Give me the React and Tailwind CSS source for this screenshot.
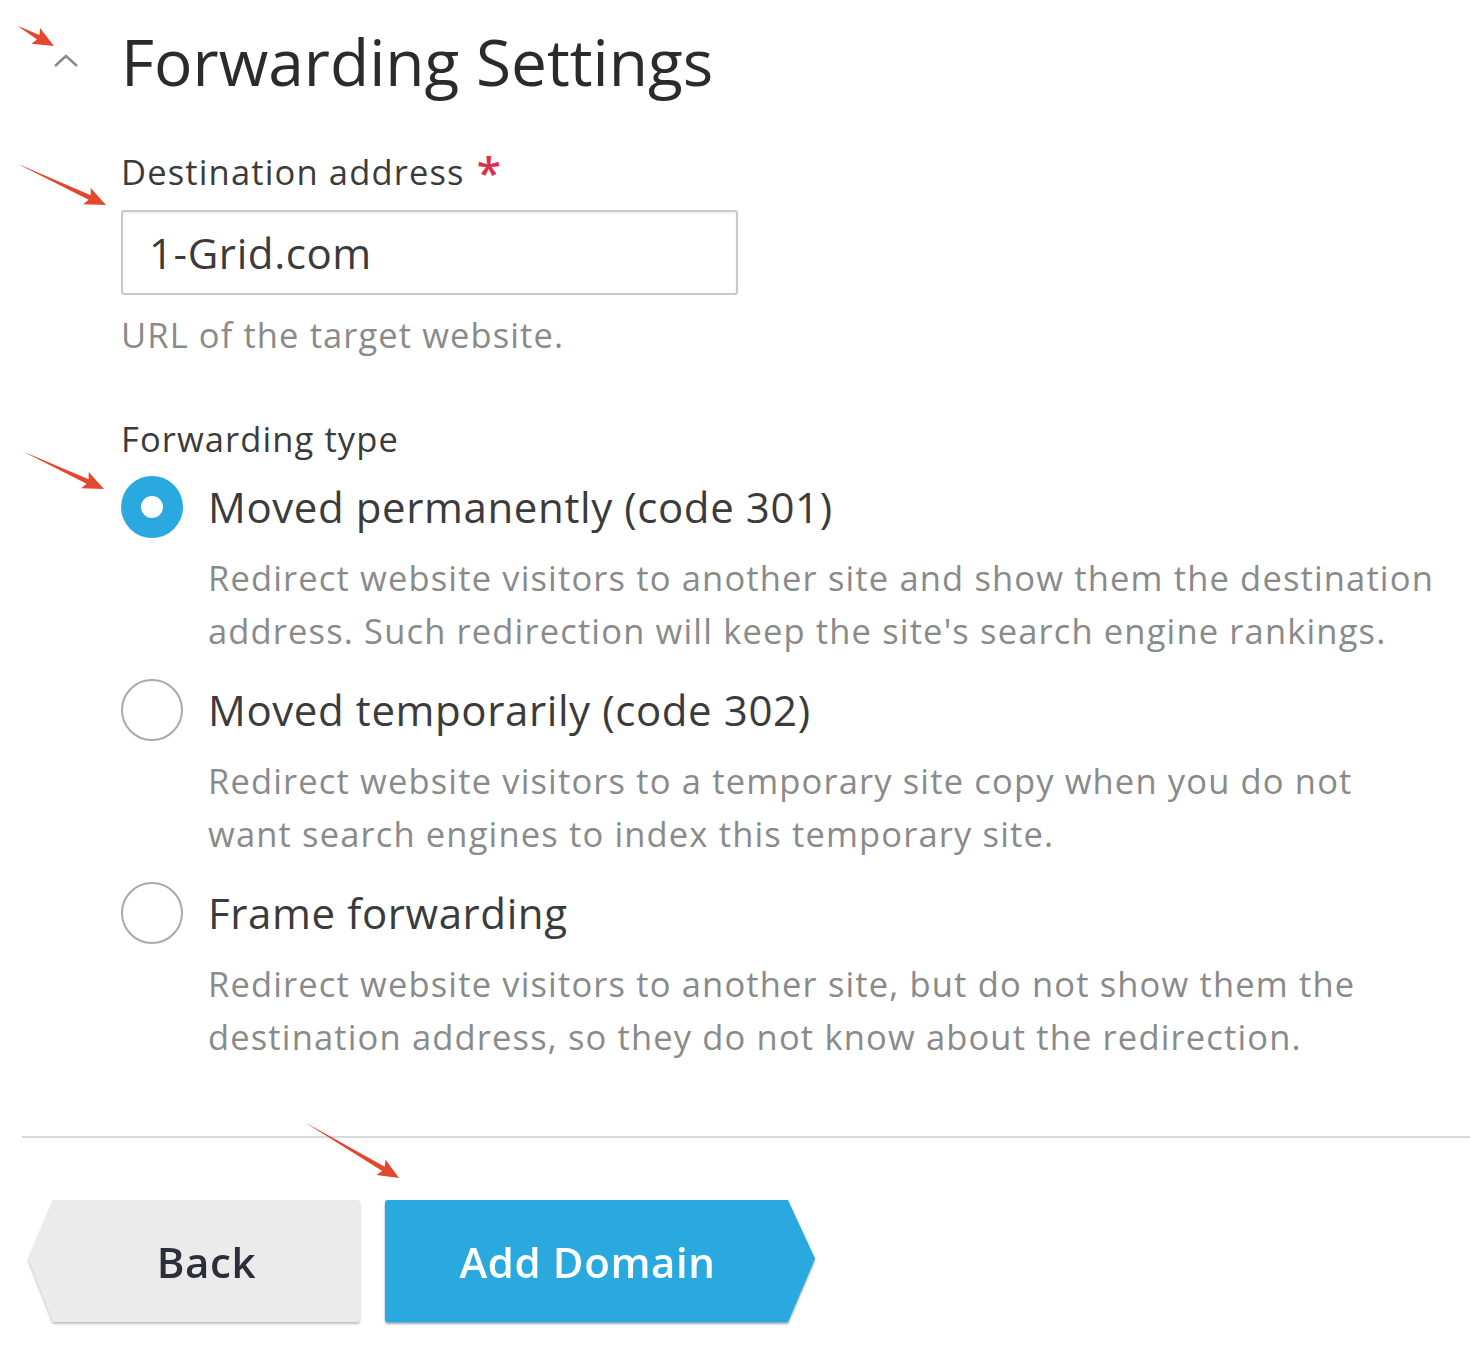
import React from "react";

function Arrow({ x1, y1, x2, y2 }) {
  const angle = Math.atan2(y2 - y1, x2 - x1);
  const len = Math.hypot(x2 - x1, y2 - y1);
  return (
    <svg
      className="absolute pointer-events-none overflow-visible"
      style={{ left: x1, top: y1, width: 1, height: 1 }}
    >
      <g transform={`rotate(${(angle * 180) / Math.PI})`}>
        <polygon
          points={`0,0 ${len - 18},-2.5 ${len - 21},-9 ${len},0 ${len - 21},9 ${len - 18},2.5`}
          fill="#e4472f"
        />
        <polygon points={`0,0 ${len - 18},-1.3 ${len - 18},1.3`} fill="#e4472f" />
      </g>
    </svg>
  );
}

function Radio({ checked }) {
  if (checked) {
    return (
      <div className="w-[62px] h-[62px] rounded-full bg-[#29a9df] flex items-center justify-center shrink-0">
        <div className="w-[22px] h-[22px] rounded-full bg-white" />
      </div>
    );
  }
  return (
    <div className="w-[62px] h-[62px] rounded-full border-[2px] border-[#a9a9a9] bg-white shrink-0" />
  );
}

function Option({ checked, title, lines }) {
  return (
    <div className="flex flex-col">
      <div className="flex items-center gap-[25px] h-[62px]">
        <Radio checked={checked} />
        <span className="text-[42px] text-[#3b3b3b] tracking-[0.6px] leading-none">{title}</span>
      </div>
      <div className="pl-[87px] pt-[13px] text-[34.5px] leading-[53px] text-[#8a8a8a] tracking-[1.15px]">
        {lines.map((l, i) => (
          <div key={i} className="whitespace-nowrap">{l}</div>
        ))}
      </div>
    </div>
  );
}

export default function App() {
  return (
    <div
      className="relative w-[1470px] h-[1352px] bg-white overflow-hidden"
      style={{ fontFamily: '"Open Sans", "Noto Sans", sans-serif' }}
    >
      <div className="flex flex-col pl-[121px] pt-[24px]">
        <div className="relative flex items-center h-[76px]">
          <svg
            className="absolute left-[-69px] top-[28px]"
            width="28"
            height="18"
            viewBox="0 0 28 18"
          >
            <polyline points="3,14 14,4 25,14" fill="none" stroke="#8c8c8c" strokeWidth="2.5" />
          </svg>
          <h1 className="text-[64px] text-[#2b2b2b] leading-none tracking-[0px] font-normal">
            Forwarding Settings
          </h1>
        </div>

        <div className="mt-[50px] text-[34.5px] text-[#3b3b3b] leading-[44px] tracking-[1.15px] flex items-start">
          <span>Destination address</span>
          <span className="ml-[12px] text-[#d9304f] text-[44px] font-semibold leading-[44px]">*</span>
        </div>
        <div className="mt-[16px] w-[617px] h-[85px] border-[2px] border-[#c9c9c9] rounded-[3px] flex items-center pl-[26px] shadow-[inset_0_2px_3px_rgba(0,0,0,0.06)]">
          <span className="text-[42px] text-[#3b3b3b] tracking-[0.6px]">1-Grid.com</span>
        </div>
        <div className="mt-[18px] text-[34.5px] text-[#8a8a8a] leading-[44px] tracking-[1.1px]">
          URL of the target website.
        </div>

        <div className="mt-[60px] text-[34.5px] text-[#3b3b3b] leading-[44px] tracking-[1.1px]">
          Forwarding type
        </div>

        <div className="mt-[15px] flex flex-col gap-[22px]">
          <Option
            checked
            title="Moved permanently (code 301)"
            lines={[
              "Redirect website visitors to another site and show them the destination",
              "address. Such redirection will keep the site's search engine rankings.",
            ]}
          />
          <Option
            title="Moved temporarily (code 302)"
            lines={[
              "Redirect website visitors to a temporary site copy when you do not",
              "want search engines to index this temporary site.",
            ]}
          />
          <Option
            title="Frame forwarding"
            lines={[
              "Redirect website visitors to another site, but do not show them the",
              "destination address, so they do not know about the redirection.",
            ]}
          />
        </div>
      </div>

      <div className="ml-[22px] mt-[73px] h-[2px] bg-[#d9d9e1]" />

      <div className="flex items-stretch gap-[25px] ml-[28px] mt-[62px] h-[122px]">
        <div className="relative w-[332px] h-[122px] drop-shadow-[0_2px_1px_rgba(0,0,0,0.25)]">
          <div className="w-full h-full bg-[#ebebeb] rounded-r-[3px] [clip-path:polygon(25px_0,100%_0,100%_100%,25px_100%,0_48%)] flex items-center justify-center pl-[25px]">
            <span className="text-[42px] font-semibold text-[#2e2e3a] tracking-[0.6px]">Back</span>
          </div>
        </div>
        <div className="relative w-[430px] h-[122px] drop-shadow-[0_2px_1px_rgba(0,60,90,0.45)]">
          <div className="w-full h-full bg-[#29a9dd] rounded-l-[3px] [clip-path:polygon(0_0,calc(100%-27px)_0,100%_48%,calc(100%-27px)_100%,0_100%)] flex items-center justify-center pr-[25px]">
            <span className="text-[42px] font-semibold text-white tracking-[0.6px]">Add Domain</span>
          </div>
        </div>
      </div>

      <Arrow x1={18} y1={26} x2={54} y2={46} />
      <Arrow x1={18} y1={164} x2={106} y2={205} />
      <Arrow x1={24} y1={452} x2={104} y2={489} />
      <Arrow x1={306} y1={1123} x2={399} y2={1178} />
    </div>
  );
}
